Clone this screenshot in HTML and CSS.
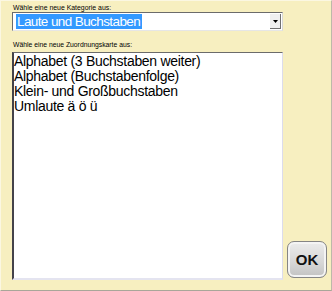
FILE: index.html
```html
<!DOCTYPE html>
<html lang="de">
  <head>
    <meta charset="utf-8">
    <title>Zuordnungskarte</title>
    <link rel="stylesheet" href="styles.css">
  </head>
  <body>
    <div class="dialog">
      <p class="label">Wähle eine neue Kategorie aus:</p>
      <div class="combo">
        <span class="combo_value">Laute und Buchstaben</span>
        <span class="combo_btn">
          <svg width="5" height="3" viewBox="0 0 5 3"><path d="M0 0h5L2.5 3z" fill="#000"/></svg>
        </span>
      </div>
      <p class="label label2">Wähle eine neue Zuordnungskarte aus:</p>
      <div class="bottom">
        <ul class="list">
          <li>Alphabet (3 Buchstaben weiter)</li>
          <li>Alphabet (Buchstabenfolge)</li>
          <li>Klein- und Großbuchstaben</li>
          <li>Umlaute ä ö ü</li>
        </ul>
        <button class="okBtn" type="button">OK</button>
      </div>
    </div>
  </body>
</html>
```

FILE: styles.css
```css
body {
  margin: 0;
  background-color: #f7efc0;
}
.dialog {
  box-sizing: border-box;
  width: 332px;
  height: 291px;
  padding: 2px 0 10px 11px;
  background-color: #f7efc0;
  border-top: 1px solid #fbf7e2;
  border-left: 1px solid #fbf7e2;
  border-right: 1px solid #bdb9a8;
  border-bottom: 1px solid #a9a699;
  display: flex;
  flex-direction: column;
  font-family: "Liberation Sans", Arial, sans-serif;
}
.label {
  margin: 0 0 0 1px;
  font-size: 6.9px;
  line-height: 9px;
  color: #000;
}
.label2 {
  margin-top: 9px;
  font-size: 6.8px;
}
.combo {
  box-sizing: border-box;
  width: 271px;
  height: 19px;
  background: #fff;
  border-top: 1px solid #6b6b6b;
  border-left: 1px solid #6b6b6b;
  border-right: 1px solid #d8d8d8;
  border-bottom: 1px solid #e6e6e6;
  display: flex;
  align-items: center;
  padding-left: 3px;
}
.combo_value {
  flex: 0 0 auto;
  background: #3399ff;
  color: #fff;
  font-size: 13.5px;
  letter-spacing: -0.6px;
  line-height: 15px;
  padding: 0 2px 0 1px;
}
.combo_btn {
  margin-left: auto;
  width: 10px;
  height: 14px;
  margin-right: 1px;
  background: #f0f0f0;
  border-right: 1px solid #707070;
  border-bottom: 1px solid #707070;
  display: flex;
  align-items: center;
  justify-content: center;
}
.bottom {
  flex: 1;
  display: flex;
  align-items: flex-end;
  gap: 3px;
  margin-top: 3px;
}
.list {
  box-sizing: border-box;
  width: 271px;
  height: 100%;
  margin: 0;
  padding: 1px 0 0 0;
  list-style: none;
  background: #fff;
  border-top: 1px solid #6b6b6b;
  border-left: 2px solid #44434a;
  border-right: 1px solid #dcdcec;
  border-bottom: 2px solid #e4e4f0;
  font-size: 14px;
  letter-spacing: -0.3px;
  line-height: 15px;
  color: #000;
}
.okBtn {
  width: 40px;
  height: 37px;
  margin-bottom: 2px;
  margin-left: 1px;
  border: 1px solid #858585;
  border-radius: 7px;
  background: linear-gradient(#ececec, #d6d6d6 60%, #c2c2c2);
  box-shadow: inset 0 0 0 2px #f4f4f4;
  font-family: "Liberation Sans", Arial, sans-serif;
  font-weight: bold;
  font-size: 15px;
  color: #111;
  padding: 0;
}
```
